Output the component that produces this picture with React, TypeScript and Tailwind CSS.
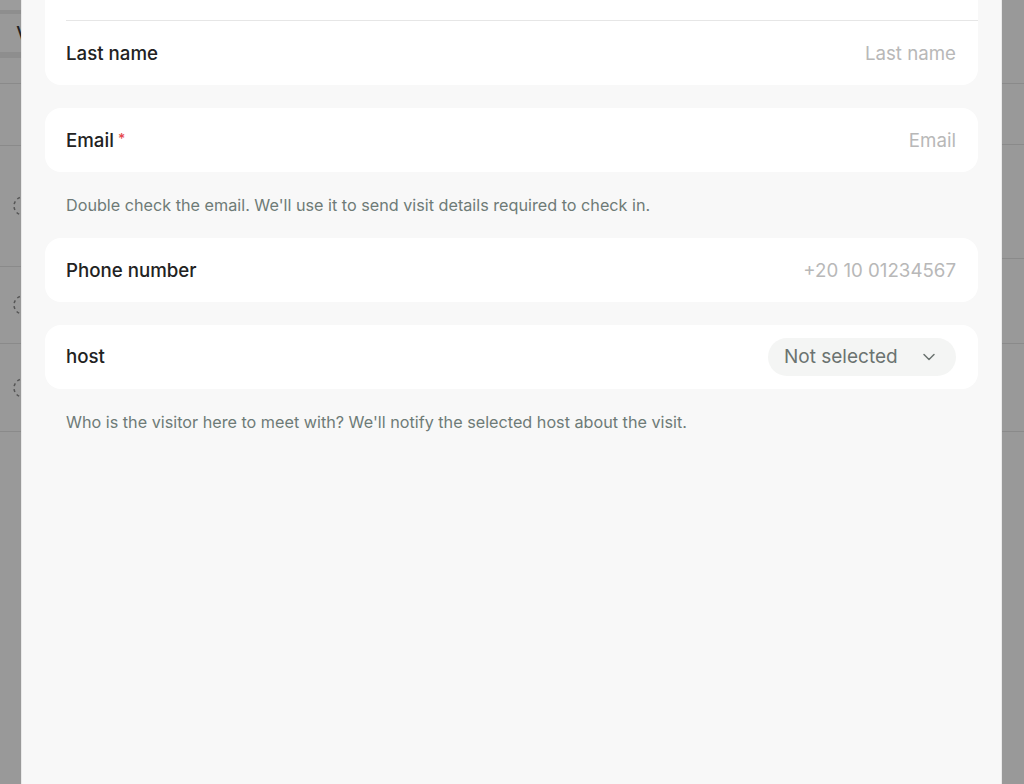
import React from 'react';
import { ChevronDown } from 'lucide-react';

const font = { fontFamily: 'Inter, "Noto Sans", sans-serif' };

function Row({ label, placeholder, required }: { label: string; placeholder: string; required?: boolean }) {
  return (
    <div className="flex h-[64px] items-center justify-between pl-[21px] pr-[22px] pt-[2px]">
      <div className="flex items-center text-[18.7px] font-medium text-[#222222]">
        {label}
        {required && <span className="ml-[4px] -mt-[4px] text-[14px] text-[#e5484d]">*</span>}
      </div>
      <div className="text-[18.7px] text-[#b8b8b8]">{placeholder}</div>
    </div>
  );
}

function Helper({ children }: { children: React.ReactNode }) {
  return <p className="h-[20px] px-[21px] text-[16.2px] leading-[20px] text-[#6e7b77]">{children}</p>;
}

function Backdrop({ side }: { side: 'left' | 'right' }) {
  const lines = side === 'left' ? [85, 148, 270, 348, 437] : [85, 147, 262, 348, 437];
  let prev = side === 'left' ? 58 : 0;
  return (
    <div className="flex h-full flex-col overflow-hidden bg-[#999999]">
      {side === 'left' && (
        <>
          <div className="h-[10px] bg-[#9c9c9c]" />
          <div className="h-[4px] bg-[#8e8e8e]" />
          <div className="flex h-[38px] items-center justify-end">
            <span className="-mr-[8px] text-[18px] font-medium text-[#222]">V</span>
          </div>
          <div className="h-[6px] bg-[#8e8e8e]" />
        </>
      )}
      {lines.map((y, i) => {
        const h = y - prev - 1;
        prev = y;
        return (
          <div key={y} className="flex flex-none items-center justify-end border-b border-[#8a8a8a]" style={{ height: h }}>
            {side === 'left' && i >= 2 && i <= 4 && (
              <svg width="14" height="24" viewBox="0 0 14 24" className="-mr-[4px]">
                <circle cx="12" cy="12" r="9" fill="none" stroke="#555" strokeWidth="1.5" strokeDasharray="3 3" />
              </svg>
            )}
          </div>
        );
      })}
    </div>
  );
}

export default function App() {
  return (
    <div className="flex h-[784px] w-[1024px] overflow-hidden bg-[#999999]" style={font}>
      <div className="w-[21px] flex-none">
        <Backdrop side="left" />
      </div>
      <div className="h-full w-[981px] flex-none overflow-hidden border-x border-[#e9e9e9] bg-[#f8f8f8] px-[23px]">
        <div className="-mt-[44px] flex flex-col gap-[23px]">
          <div className="rounded-[16px] bg-white">
            <Row label="First name" placeholder="First name" />
            <div className="ml-[21px] border-t border-[#e6e6e6]" />
            <Row label="Last name" placeholder="Last name" />
          </div>
          <div className="rounded-[16px] bg-white">
            <Row label="Email" placeholder="Email" required />
          </div>
          <Helper>Double check the email. We'll use it to send visit details required to check in.</Helper>
          <div className="rounded-[16px] bg-white">
            <Row label="Phone number" placeholder="+20 10 01234567" />
          </div>
          <div className="flex h-[64px] items-center justify-between rounded-[16px] bg-white pl-[21px] pr-[22px]">
            <div className="text-[18.7px] font-medium text-[#222222]">host</div>
            <button className="flex h-[38px] w-[188px] items-center justify-between rounded-full bg-[#f4f5f4] pl-[16px] pr-[17px] text-[19px] text-[#6b7370]">
              Not selected
              <ChevronDown className="h-[20px] w-[20px] text-[#6b7370]" strokeWidth={1.8} />
            </button>
          </div>
          <Helper>Who is the visitor here to meet with? We'll notify the selected host about the visit.</Helper>
        </div>
      </div>
      <div className="flex-1">
        <Backdrop side="right" />
      </div>
    </div>
  );
}
